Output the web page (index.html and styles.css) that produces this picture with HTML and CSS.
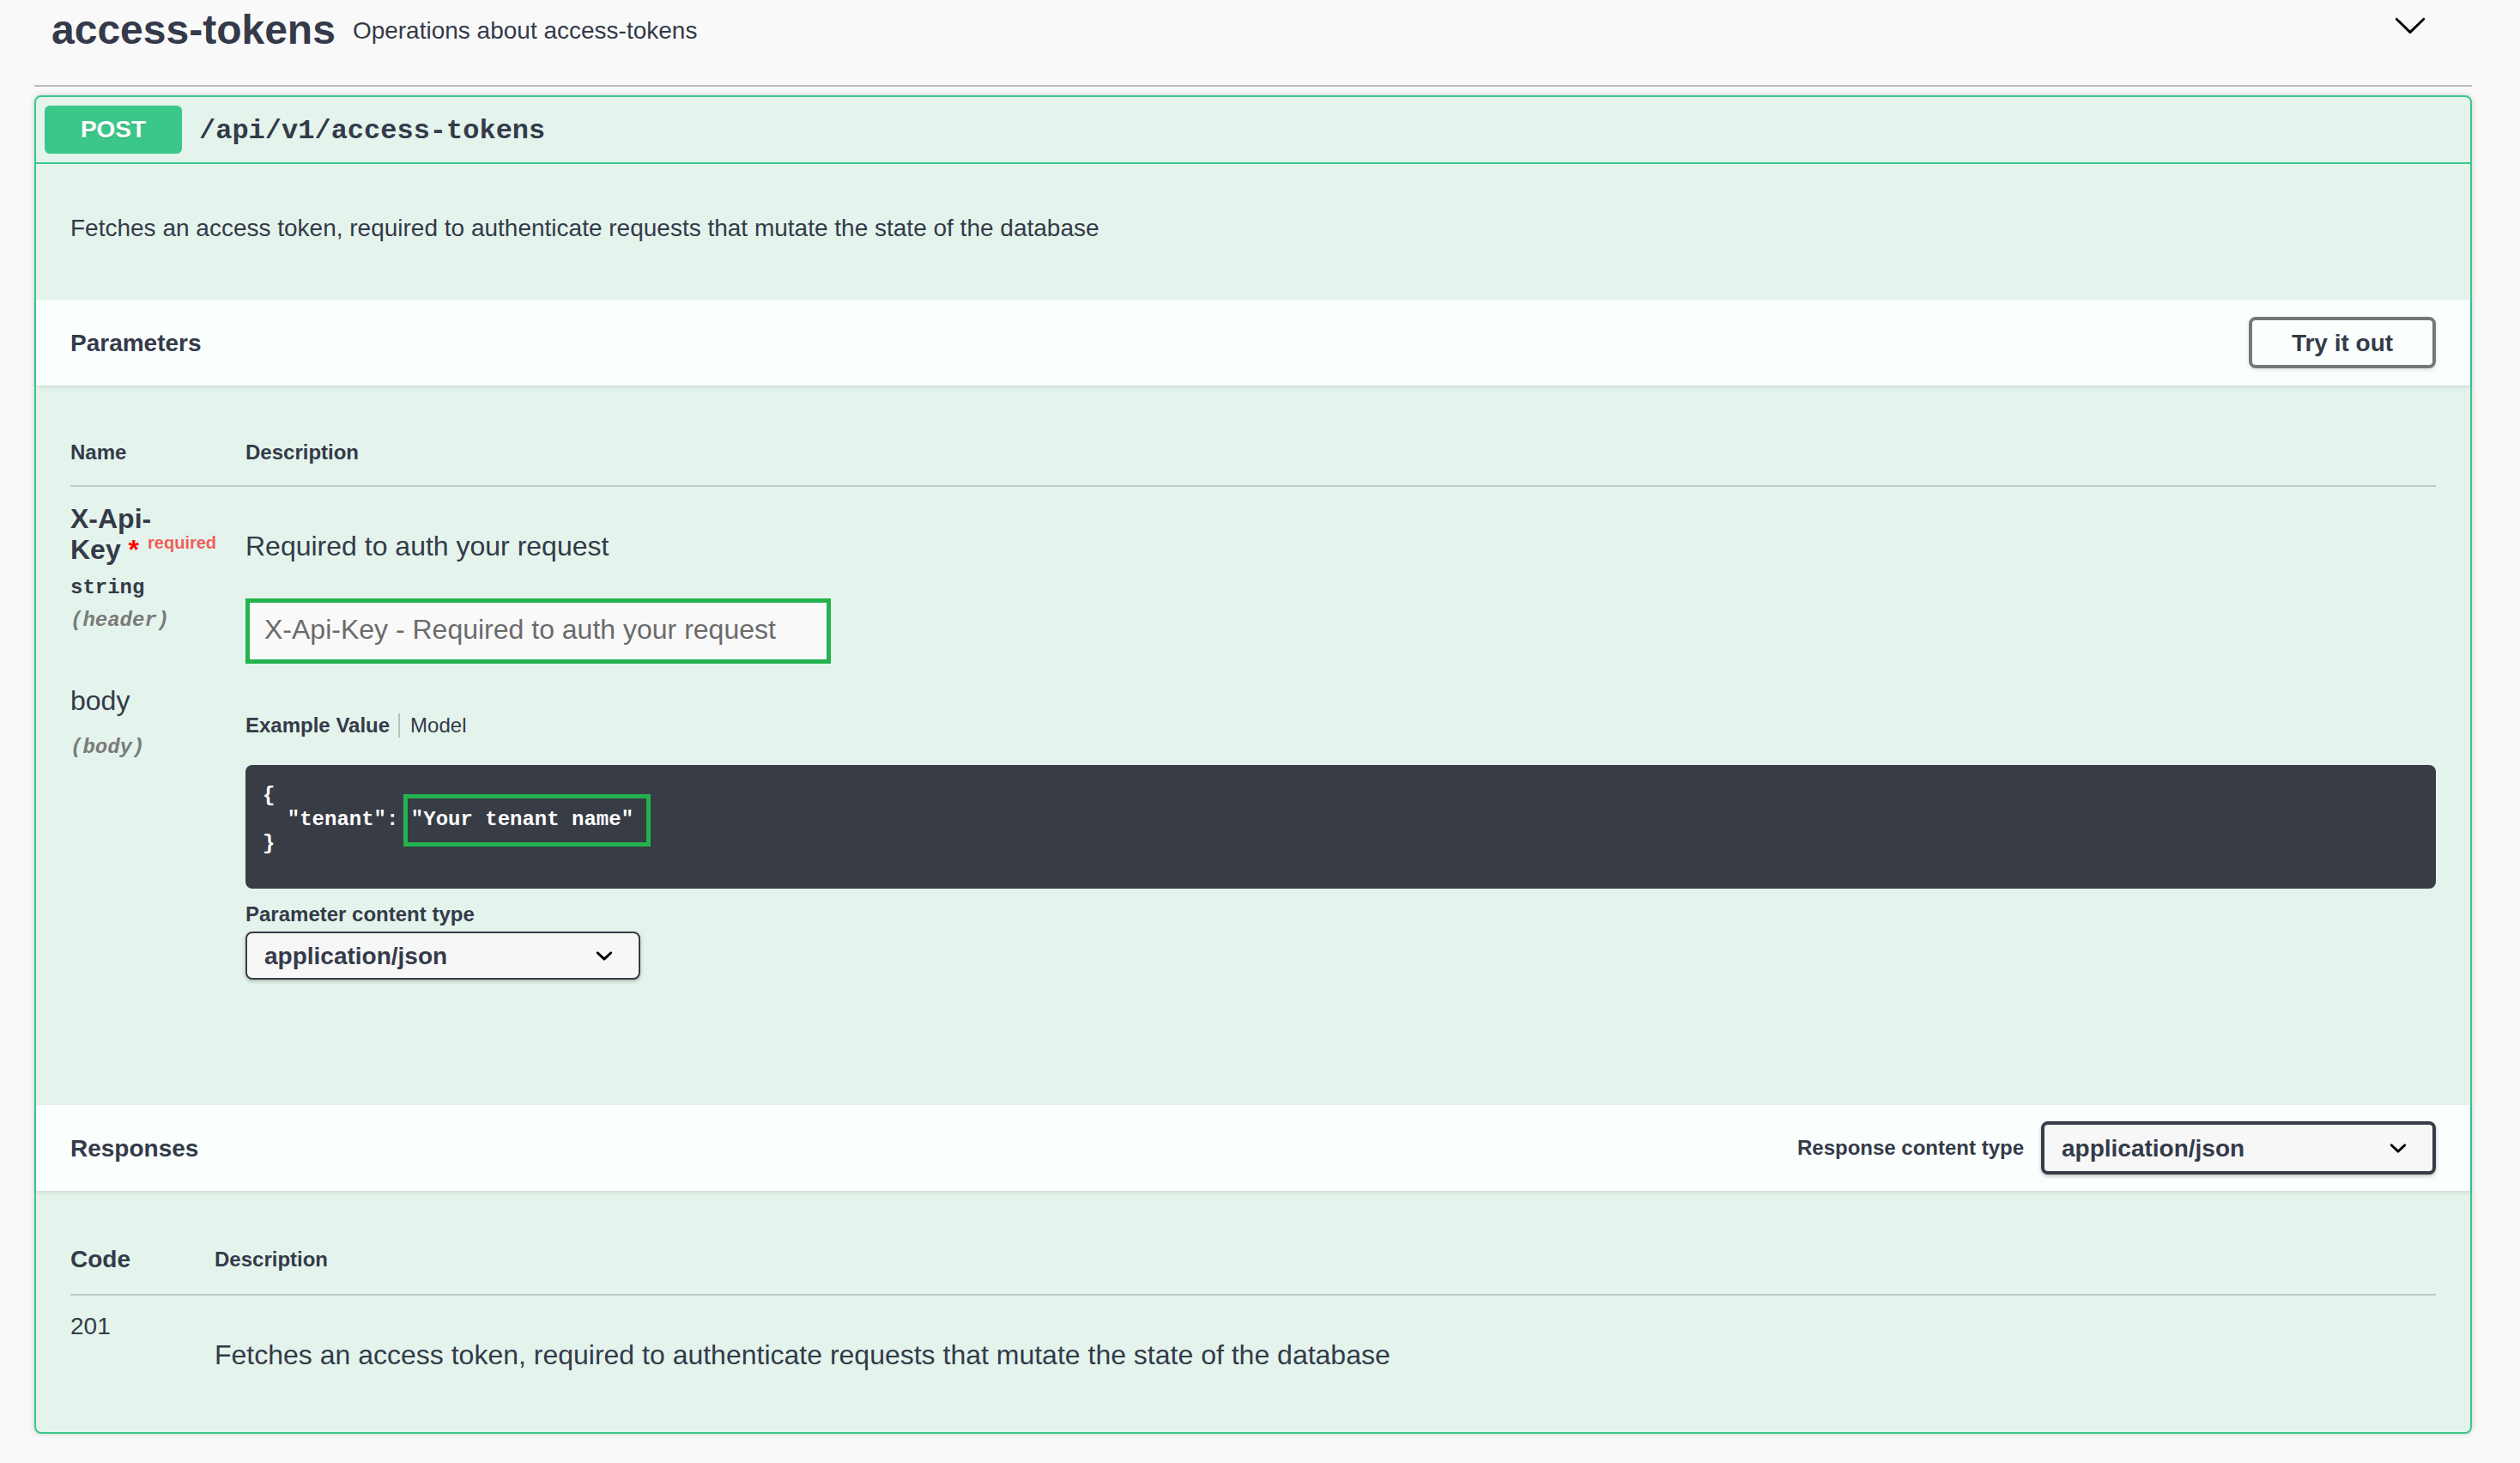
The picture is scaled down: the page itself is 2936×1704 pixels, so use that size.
FILE: index.html
```html
<!DOCTYPE html>
<html lang="en">
<head>
  <meta charset="UTF-8">
  <meta name="viewport" content="width=device-width, initial-scale=1.0">
  <title>access-tokens</title>
  <link rel="stylesheet" href="styles.css">
</head>
<body>
  <main class="tag-section">
    <header class="tag-header">
      <h3 class="tag-title">access-tokens</h3>
      <span class="tag-info">Operations about access-tokens</span>
      <button class="expand" type="button" aria-label="Collapse operation">
        <svg width="40" height="40" viewBox="0 0 20 20">
          <path d="M17.418 6.109c.272-.268.709-.268.979 0s.271.701 0 .969l-7.908 7.83c-.27.268-.707.268-.979 0l-7.908-7.83c-.27-.268-.27-.701 0-.969.271-.268.709-.268.979 0L10 13.25l7.418-7.141z"/>
        </svg>
      </button>
    </header>

    <section class="opblock">
      <div class="opblock-summary">
        <span class="method">POST</span>
        <span class="path">/api/v1/access-tokens</span>
      </div>

      <p class="opblock-description">Fetches an access token, required to authenticate requests that mutate the state of the database</p>

      <div class="section-header">
        <h4>Parameters</h4>
        <button class="btn" type="button">Try it out</button>
      </div>

      <div class="table-container params">
        <table>
          <thead>
            <tr>
              <th class="col-name">Name</th>
              <th>Description</th>
            </tr>
          </thead>
          <tbody>
            <tr>
              <td>
                <label class="param-name required" for="api-key">X-Api-<wbr>Key&nbsp;<span class="star">*</span><span class="required-mark">required</span></label>
                <div class="param-type">string</div>
                <div class="param-in">(header)</div>
              </td>
              <td>
                <p class="description">Required to auth your request</p>
                <input class="highlight" id="api-key" type="text" placeholder="X-Api-Key - Required to auth your request">
              </td>
            </tr>
            <tr>
              <td>
                <div class="param-name">body</div>
                <div class="param-in body-in">(body)</div>
              </td>
              <td>
                <div class="tabs">
                  <button class="tab active" type="button">Example Value</button>
                  <button class="tab" type="button">Model</button>
                </div>
                <pre class="example">{
  "tenant": <span class="marked">"Your tenant name"</span>
}</pre>
                <label class="small-label" for="param-type">Parameter content type</label>
                <select class="content-type" id="param-type">
                  <option>application/json</option>
                </select>
              </td>
            </tr>
          </tbody>
        </table>
      </div>

      <div class="section-header">
        <h4>Responses</h4>
        <div class="response-type">
          <label class="small-label" for="response-type">Response content type</label>
          <select class="content-type thick" id="response-type">
            <option>application/json</option>
          </select>
        </div>
      </div>

      <div class="table-container responses">
        <table>
          <thead>
            <tr>
              <th class="col-code">Code</th>
              <th>Description</th>
            </tr>
          </thead>
          <tbody>
            <tr>
              <td class="status">201</td>
              <td><p class="description">Fetches an access token, required to authenticate requests that mutate the state of the database</p></td>
            </tr>
          </tbody>
        </table>
      </div>
    </section>
  </main>
</body>
</html>
```
FILE: styles.css
```css
* {
  box-sizing: border-box;
}

body {
  margin: 0;
  background-color: #f9f9f9;
  color: #343a49;
  font-family: "Liberation Sans", Arial, sans-serif;
  font-size: 28px;
  line-height: 32px;
}

h3, h4, p, pre {
  margin: 0;
}

button, input, select {
  font-family: inherit;
  color: inherit;
}

.tag-section {
  padding: 0 56px 30px 40px;
}

/* Tag header */
.tag-header {
  display: flex;
  align-items: center;
  gap: 20px;
  padding: 5px 52px 34px 20px;
  border-bottom: 2px solid #b9bbc0;
  margin-bottom: 10px;
}

.tag-title {
  font-size: 48px;
  line-height: 60px;
}

.tag-info {
  padding-top: 2px;
}

.expand {
  display: flex;
  align-self: flex-start;
  margin: 4px 0 0 auto;
  padding: 0;
  border: none;
  background: none;
}

/* Operation block */
.opblock {
  background-color: #e4f4ec;
  border: 2px solid #3bc78a;
  border-radius: 8px;
  box-shadow: 0 0 6px rgba(0, 0, 0, 0.19);
}

.opblock-summary {
  display: flex;
  align-items: center;
  padding: 10px;
  border-bottom: 2px solid #3bc78a;
}

.method {
  width: 160px;
  padding: 12px 0;
  border-radius: 6px;
  background-color: #3bc78a;
  color: #fff;
  font-weight: bold;
  text-align: center;
  text-shadow: 0 2px 0 rgba(0, 0, 0, 0.1);
}

.path {
  padding: 4px 20px 0;
  font-family: "Liberation Mono", monospace;
  font-size: 32px;
  font-weight: bold;
}

.opblock-description {
  padding: 59px 40px 67px;
}

.section-header {
  display: flex;
  align-items: center;
  justify-content: space-between;
  min-height: 100px;
  padding: 0 40px;
  background-color: #fafefd;
  box-shadow: 0 2px 4px rgba(0, 0, 0, 0.1);
}

.section-header h4 {
  padding-top: 2px;
  font-size: 28px;
}

.btn {
  width: 218px;
  height: 60px;
  padding: 2px 0 0;
  border: 4px solid #777;
  border-radius: 8px;
  background: transparent;
  box-shadow: 0 2px 4px rgba(0, 0, 0, 0.1);
  font-size: 28px;
  font-weight: bold;
}

/* Tables */
.table-container {
  padding: 40px 40px 0;
}

.params {
  padding-bottom: 146px;
}

.responses {
  padding-bottom: 72px;
}

table {
  width: 100%;
  border-collapse: separate;
  border-spacing: 0;
  table-layout: fixed;
}

th {
  padding: 24px 0;
  border-bottom: 2px solid #bccbc9;
  font-size: 24px;
  line-height: 28px;
  text-align: left;
}

td {
  padding: 20px 0 0;
  vertical-align: top;
}

.col-name {
  width: 204px;
}

.col-code {
  width: 168px;
  font-size: 28px;
  line-height: 32px;
}

.description {
  padding-top: 31px;
  font-size: 32px;
  line-height: 36px;
}

/* Parameters */
.param-name {
  display: block;
  font-size: 32px;
  line-height: 36px;
}

.required {
  margin-top: -1px;
  font-weight: bold;
}

.star {
  color: #f00;
}

.required-mark {
  position: relative;
  top: -12px;
  padding: 0 10px;
  color: rgba(255, 0, 0, 0.65);
  font-size: 20px;
  line-height: 20px;
}

.param-type,
.param-in {
  font-family: "Liberation Mono", monospace;
  font-size: 24px;
  line-height: 28px;
  font-weight: bold;
}

.param-type {
  padding-top: 13px;
}

.param-in {
  padding-top: 10px;
  color: #7a7a7a;
  font-style: italic;
}

.body-in {
  padding-top: 23px;
}

.highlight {
  display: block;
  width: 682px;
  height: 76px;
  margin: 43px 0 5px;
  padding: 0 17px 4px;
  border: 5px solid #24b24e;
  background-color: #f9f9f9;
  font-size: 32px;
}

.highlight::placeholder {
  color: #6b6b6b;
}

.tabs {
  display: flex;
  padding: 33px 0 32px;
}

.tab {
  padding: 0;
  border: none;
  background: none;
  font-size: 24px;
  line-height: 28px;
}

.tab.active {
  padding-right: 10px;
  margin-right: 12px;
  border-right: 2px solid #b6c3bd;
  font-weight: bold;
}

.example {
  margin-bottom: 18px;
  padding: 22px 20px 38px;
  border-radius: 8px;
  background-color: #383c45;
  color: #fff;
  font-family: "Liberation Mono", monospace;
  font-size: 24px;
  line-height: 28px;
  font-weight: bold;
}

.marked {
  position: relative;
}

/* Frame drawn around the value, over the neighbouring lines */
.marked::after {
  content: "";
  position: absolute;
  inset: -16px -20px -18px -9px;
  border: 5px solid #24b24e;
}

.small-label {
  display: block;
  font-size: 24px;
  line-height: 24px;
  font-weight: bold;
}

.content-type {
  display: block;
  width: 460px;
  height: 56px;
  margin-top: 8px;
  padding: 0 80px 0 20px;
  border: 2px solid #383c47;
  border-radius: 8px;
  appearance: none;
  background: #f7f7f7 url('data:image/svg+xml;utf8,<svg xmlns="http://www.w3.org/2000/svg" viewBox="0 0 20 20"><path d="M13.418 7.859a.695.695 0 0 1 .978 0 .68.68 0 0 1 0 .969l-3.908 3.83a.697.697 0 0 1-.979 0l-3.908-3.83a.68.68 0 0 1 0-.969.695.695 0 0 1 .978 0L10 11l3.418-3.141z"/></svg>') right 20px center / 40px no-repeat;
  box-shadow: 0 2px 4px rgba(0, 0, 0, 0.25);
  font-size: 28px;
  font-weight: bold;
}

.thick {
  height: 62px;
  margin-top: 0;
  border-width: 4px;
}

.response-type {
  display: flex;
  align-items: center;
  gap: 20px;
}
```
